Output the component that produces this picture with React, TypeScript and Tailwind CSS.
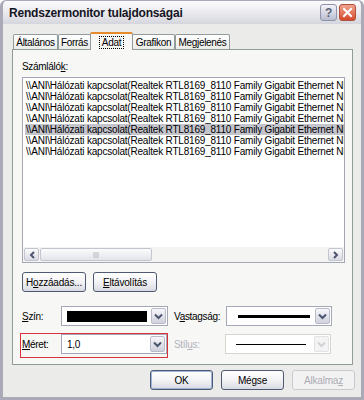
import React from "react";

const ROW = "\\\\ANI\\Hálózati kapcsolat(Realtek RTL8169_8110 Family Gigabit Ethernet NIC)\\Fogadott bájtok/mp";

function DropButton({ disabled }: { disabled?: boolean }) {
  return (
    <div
      className={`w-[15px] h-full flex items-center justify-center rounded-[2px] border ${
        disabled
          ? "border-[#e2e2e6] bg-[#f4f4f4]"
          : "border-[#b9bccb] bg-gradient-to-b from-[#f7f7fa] to-[#cfd1dc]"
      }`}
    >
      <svg width="9" height="7" viewBox="0 0 9 7">
        <path
          d="M1 1.5 L4.5 5 L8 1.5"
          fill="none"
          stroke={disabled ? "#d2d2d6" : "#4c5570"}
          strokeWidth="2"
        />
      </svg>
    </div>
  );
}

function Combo({ children, disabled, className }: { children?: React.ReactNode; disabled?: boolean; className?: string }) {
  return (
    <div className={`flex h-[20px] p-px bg-white border ${disabled ? "border-[#d6d5ce]" : "border-[#a4a8b6]"} ${className ?? ""}`}>
      <div className="flex-1 flex items-center px-[4px] overflow-hidden">{children}</div>
      <DropButton disabled={disabled} />
    </div>
  );
}

function Btn({ children, variant, className }: { children: React.ReactNode; variant?: "default" | "disabled"; className?: string }) {
  const base = "h-[20px] flex items-center justify-center rounded-[3px] text-[10px] tracking-[-0.2px]";
  if (variant === "disabled") {
    return <div className={`${base} border border-[#c9c9d0] bg-[#f2f2f2] text-[#acacb4] ${className ?? ""}`}>{children}</div>;
  }
  return (
    <div
      className={`${base} border border-[#4e5a72] bg-gradient-to-b from-white via-[#f3f3f6] to-[#d9d9e2] text-black ${
        variant === "default" ? "shadow-[inset_0_0_0_1px_#9fb3d8]" : ""
      } ${className ?? ""}`}
    >
      {children}
    </div>
  );
}

function Tab({ label, selected, className }: { label: string; selected?: boolean; className?: string }) {
  if (selected) {
    return (
      <div className={`relative z-10 -mb-px h-[18px] flex items-start justify-center pt-[2px] bg-[#f7f7f6] border-x border-[#919b9c] border-t-2 border-t-[#e68b2c] rounded-t-[2px] ${className ?? ""}`}>
        <span className="px-[2px] leading-[11px] border border-dotted border-black">{label}</span>
      </div>
    );
  }
  return (
    <div className={`h-[15px] flex items-center justify-center bg-gradient-to-b from-white to-[#ebebe8] border border-b-0 border-[#919b9c] rounded-t-[2px] ${className ?? ""}`}>
      {label}
    </div>
  );
}

export default function App() {
  return (
    <div className="w-[364px] h-[400px] flex flex-col font-['Liberation_Sans',Arial,sans-serif] text-black text-[10px] tracking-[-0.3px]">
      {/* Title bar */}
      <div className="h-[24px] flex items-center justify-between pl-[6px] pr-[5px] bg-gradient-to-b from-[#fbfbfc] via-[#ebebef] to-[#d5d5dd] border-x-[3px] border-t border-[#a9a9b8] rounded-t-[6px]">
        <span className="font-bold text-[12px] tracking-[-0.2px] text-[#15151f]">Rendszermonitor tulajdonságai</span>
        <div className="flex gap-[2px]">
          <div className="w-[17px] h-[17px] rounded-[3px] border border-[#8e93a8] bg-gradient-to-b from-[#f3f4f8] to-[#b9bdcf] flex items-center justify-center text-[12px] font-bold text-[#5b6177]">?</div>
          <div className="w-[17px] h-[17px] rounded-[3px] border border-[#b0503a] bg-gradient-to-b from-[#f0a38e] to-[#d4472a] flex items-center justify-center">
            <svg width="11" height="11" viewBox="0 0 11 11">
              <path d="M2 2 L9 9 M9 2 L2 9" stroke="white" strokeWidth="2" strokeLinecap="square" />
            </svg>
          </div>
        </div>
      </div>

      {/* Body */}
      <div className="flex-1 flex flex-col bg-[#ebebe9] border-x-[3px] border-b-[3px] border-[#a9a9b8] pl-[9px] pr-[6px]">
        {/* Tabs */}
        <div className="flex items-end pt-[8px] pl-px">
          <Tab label="Általános" className="w-[45px]" />
          <Tab label="Forrás" className="w-[33px]" />
          <Tab label="Adat" selected className="w-[43px] ml-[-1px] mr-[-1px]" />
          <Tab label="Grafikon" className="w-[43px]" />
          <Tab label="Megjelenés" className="w-[55px]" />
        </div>

        {/* Panel */}
        <div className="w-[341px] h-[316px] border border-[#919b9c] bg-[#f7f7f6] pl-[9px] pt-[11px]">
          <div className="leading-[12px]">
            Számláló<span className="underline">k</span>:
          </div>
          <div className="mt-[4px] w-[323px] h-[186px] border border-[#a4a8b6] bg-white flex flex-col">
            <div className="flex-1 overflow-hidden pt-[2px] pl-[2px] tracking-[-0.2px]">
              {Array.from({ length: 7 }).map((_, i) => (
                <div
                  key={i}
                  className={`h-[11px] leading-[11px] whitespace-nowrap pl-px ${i === 4 ? "bg-[#c4c4cc]" : ""}`}
                >
                  {ROW}
                </div>
              ))}
            </div>
            {/* Horizontal scrollbar */}
            <div className="h-[15px] flex bg-[#f4f4f2] p-px gap-px">
              <div className="w-[15px] rounded-[2px] border border-[#c2c4d0] bg-gradient-to-b from-[#fbfbfc] to-[#dadbe3] flex items-center justify-center">
                <svg width="6" height="8" viewBox="0 0 6 8"><path d="M5 1 L2 4 L5 7" fill="none" stroke="#4c5570" strokeWidth="2" /></svg>
              </div>
              <div className="w-[112px] rounded-[2px] border border-[#c2c4d0] bg-gradient-to-b from-[#fbfbfc] to-[#e4e5eb] flex items-center justify-center">
                <svg width="7" height="6" viewBox="0 0 7 6"><path d="M1 0V6M3 0V6M5 0V6" stroke="#b6b8c4" strokeWidth="1" /></svg>
              </div>
              <div className="flex-1" />
              <div className="w-[15px] rounded-[2px] border border-[#c2c4d0] bg-gradient-to-b from-[#fbfbfc] to-[#dadbe3] flex items-center justify-center">
                <svg width="6" height="8" viewBox="0 0 6 8"><path d="M1 1 L4 4 L1 7" fill="none" stroke="#4c5570" strokeWidth="2" /></svg>
              </div>
            </div>
          </div>

          {/* Add / remove */}
          <div className="flex gap-[7px] mt-[9px]">
            <Btn className="w-[64px] h-[18px]">H<span className="underline">o</span>zzáadás...</Btn>
            <Btn className="w-[64px] h-[18px]"><span className="underline">E</span>ltávolítás</Btn>
          </div>

          {/* Szín / Vastagság */}
          <div className="flex items-center mt-[14px]">
            <span className="w-[39px]"><span className="underline">S</span>zín:</span>
            <Combo className="w-[107px]">
              <div className="w-full h-[11px] bg-black" />
            </Combo>
            <span className="w-[58px] pl-[6px]">V<span className="underline">a</span>stagság:</span>
            <Combo className="w-[106px]">
              <div className="w-full flex justify-center pl-[4px]"><div className="w-[72px] h-[3px] bg-black" /></div>
            </Combo>
          </div>

          {/* Méret / Stílus */}
          <div className="flex items-center mt-[8px]">
            <div className="relative flex items-center">
              <div className="absolute -left-[2px] -top-px -right-px -bottom-[4px] border border-[#d9333a] pointer-events-none" />
              <span className="w-[39px]"><span className="underline">M</span>éret:</span>
              <Combo className="w-[106px]">
                <span>1,0</span>
              </Combo>
            </div>
            <span className="w-[58px] pl-[7px] text-[#b4b4bc]">Stíl<span className="underline">u</span>s:</span>
            <Combo disabled className="w-[106px]">
              <div className="w-full flex justify-center"><div className="w-[70px] h-px bg-black" /></div>
            </Combo>
          </div>
        </div>

        {/* Dialog buttons */}
        <div className="flex justify-end gap-[8px] mt-[5px]">
          <Btn variant="default" className="w-[63px]">OK</Btn>
          <Btn className="w-[63px]">Mégse</Btn>
          <Btn variant="disabled" className="w-[63px]">Alkalma<span className="underline">z</span></Btn>
        </div>
      </div>
    </div>
  );
}
